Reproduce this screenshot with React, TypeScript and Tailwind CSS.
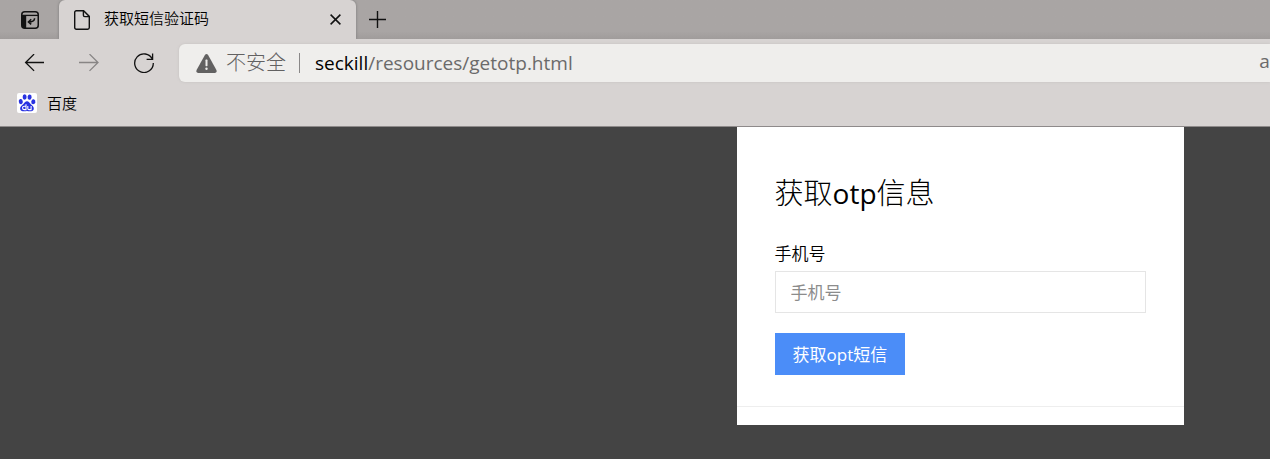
import React from "react";

function TabActionsIcon() {
  return (
    <svg width="18" height="18" viewBox="0 0 18 18" fill="none" aria-hidden="true">
      <rect x="0.75" y="0.75" width="16.5" height="16.5" rx="3" stroke="#111" strokeWidth="1.5" />
      <path d="M1 4.4H17" stroke="#111" strokeWidth="1.3" />
      <path d="M1 4.4H5.2V17H3.6A2.6 2.6 0 0 1 1 14.4Z" fill="#111" />
      <path d="M13.6 7.2C13.6 9.6 12 10.9 7.6 10.9M10.2 8.2L7.4 10.9L10.2 13.4" stroke="#111" strokeWidth="1.5" />
    </svg>
  );
}

function PageIcon() {
  return (
    <svg width="16" height="20" viewBox="0 0 16 20" fill="none" aria-hidden="true">
      <path
        d="M2.3 0.7H9.6L15.3 6.4V17.6A1.6 1.6 0 0 1 13.7 19.2H2.3A1.6 1.6 0 0 1 0.7 17.6V2.3A1.6 1.6 0 0 1 2.3 0.7Z"
        stroke="#111"
        strokeWidth="1.4"
      />
      <path d="M9.4 1V5.2A1.4 1.4 0 0 0 10.8 6.6H15" stroke="#111" strokeWidth="1.4" />
    </svg>
  );
}

function ArrowIcon({ forward = false }: { forward?: boolean }) {
  return (
    <svg width="20" height="18" viewBox="0 0 20 18" fill="none" aria-hidden="true">
      {forward ? (
        <path d="M0 8.5H19M10.5 0.1L19 8.5L10.5 16.9" stroke="#888585" strokeWidth="1.3" />
      ) : (
        <path d="M20 8.5H1.6M10.1 0.1L1.6 8.5L10.1 16.9" stroke="#111" strokeWidth="1.3" />
      )}
    </svg>
  );
}

function RefreshIcon() {
  return (
    <svg width="20" height="20" viewBox="0 0 20 20" fill="none" aria-hidden="true">
      <path d="M18.4 6.2A9.3 9.3 0 1 0 19.3 10" stroke="#111" strokeWidth="1.3" />
      <path d="M18.6 0.4V6.3H12.6" stroke="#111" strokeWidth="1.3" />
    </svg>
  );
}

function WarningIcon() {
  return (
    <svg width="21" height="19" viewBox="0 0 21 19" aria-hidden="true">
      <path
        d="M8.9 1.1Q10.5 -0.9 12.1 1.1L20.4 16Q21.2 18.6 18.7 19H2.3Q-0.2 18.6 0.6 16Z"
        fill="#626161"
      />
      <rect x="9.5" y="5.6" width="2" height="6.6" rx="0.6" fill="#efeeec" />
      <circle cx="10.5" cy="14.8" r="1.2" fill="#efeeec" />
    </svg>
  );
}

function BaiduIcon() {
  return (
    <svg width="20" height="20" viewBox="0 0 20 20" aria-hidden="true">
      <rect width="20" height="20" rx="2" fill="#fff" />
      <g fill="#2932e1">
        <ellipse cx="3.8" cy="8.6" rx="2" ry="2.6" transform="rotate(-12 3.8 8.6)" />
        <ellipse cx="7.6" cy="4" rx="2" ry="2.7" />
        <ellipse cx="12.6" cy="4.1" rx="2" ry="2.7" transform="rotate(8 12.6 4.1)" />
        <ellipse cx="16.3" cy="8.8" rx="2" ry="2.5" transform="rotate(10 16.3 8.8)" />
        <path d="M10 8.2C11.8 8.2 12.5 9.7 13.6 10.9C15 12.2 17 13.4 16.8 15.7C16.6 18.4 13.9 18.5 10 18.1C6 18.5 3.3 18.4 3.1 15.7C3 13.4 5.1 12.2 6.4 10.9C7.5 9.7 8.2 8.2 10 8.2Z" />
      </g>
      <g fill="none" stroke="#fff" strokeWidth="1.1">
        <path d="M9 11.3V16.6H7.3C5 16.6 5 13.2 7.3 13.2H9" />
        <path d="M10.8 13V15.4Q10.8 16.6 12 16.6H14.1V13" />
      </g>
    </svg>
  );
}

function TabBar() {
  return (
    <div className="flex h-[39px] bg-[#a8a4a3] bg-linear-to-b from-[#a9a5a4] from-80% to-[#a09c9b]">
      <button type="button" aria-label="Tab actions" className="flex w-[59px] items-center justify-center">
        <TabActionsIcon />
      </button>
      <div className="flex w-[297px] items-center rounded-t-md bg-[#d7d3d2] pl-[15px] pr-[13px] shadow-[0_0_3px_#777]">
        <PageIcon />
        <span className="ml-[14px] flex-1 pb-[3px] text-[15px] font-[350] leading-5 text-black">获取短信验证码</span>
        <button type="button" aria-label="Close tab" className="flex w-4 justify-center">
          <svg width="11" height="11" viewBox="0 0 11 11" aria-hidden="true">
            <path d="M0.6 0.6L10.4 10.4M10.4 0.6L0.6 10.4" stroke="#111" strokeWidth="1.5" />
          </svg>
        </button>
      </div>
      <button type="button" aria-label="New tab" className="flex w-[42px] items-center justify-center">
        <svg width="17" height="17" viewBox="0 0 17 17" aria-hidden="true">
          <path d="M8.5 0V17M0 8.5H17" stroke="#111" strokeWidth="1.4" />
        </svg>
      </button>
    </div>
  );
}

function Toolbar() {
  return (
    <div className="relative flex h-12 items-center bg-[#d7d3d2] pl-6">
      <button type="button" aria-label="Back" className="mr-[35px]">
        <ArrowIcon />
      </button>
      <button type="button" aria-label="Forward" className="mr-[35px]">
        <ArrowIcon forward />
      </button>
      <button type="button" aria-label="Refresh" className="mr-[25px]">
        <RefreshIcon />
      </button>
      <div className="flex h-[38px] min-w-0 flex-1 items-center overflow-hidden rounded-l-md bg-[#efeeec] pl-[17px] leading-7 shadow-[0_0_3px_#c4c0bf]">
        <WarningIcon />
        <span className="ml-[9px] shrink-0 text-xl font-light text-[#626161]">不安全</span>
        <span className="ml-[13px] h-5 w-px shrink-0 bg-[#8a8888]" />
        <span className="ml-[15px] flex-1 whitespace-nowrap font-['Open_Sans',sans-serif] text-[19px] text-[#6b6a6a]">
          <span className="text-black">seckill</span>/resources/getotp.html
        </span>
        <button type="button" aria-label="Translate" className="w-[11px] shrink-0 pb-1 text-[19px] text-[#6b6a6a]">
          a
        </button>
      </div>
    </div>
  );
}

export default function App() {
  return (
    <div className="flex min-h-screen flex-col overflow-x-hidden bg-[#444] font-['Open_Sans','Noto_Sans_CJK_SC',sans-serif]">
      <header>
        <TabBar />
        <Toolbar />
        <nav className="flex h-10 items-start border-b border-[#8e8a8a] bg-[#d7d3d2] pl-[17px] pt-[6px]">
          <a href="#baidu" className="flex items-center gap-[10px] text-[15px] font-[350] leading-5 text-black">
            <BaiduIcon />
            百度
          </a>
        </nav>
      </header>
      <main className="ml-[58%] w-[447px] max-w-full bg-white pb-[18px] pt-[46px]">
        <form className="flex flex-col items-start border-b border-[#eee] px-[38px] pb-[31px]" onSubmit={(e) => e.preventDefault()}>
          <h3 className="text-[29px] font-light leading-10 text-black">
            获取<span className="text-[28px] font-normal">otp</span>信息
          </h3>
          <label htmlFor="phone" className="mt-[29px] text-[17px] font-[350] leading-6 text-black">
            手机号
          </label>
          <input
            id="phone"
            type="text"
            placeholder="手机号"
            className="mt-[5px] h-[42px] w-full border border-[#e5e5e5] bg-white px-[15px] text-[17px] text-black outline-none placeholder:text-[#8c8c8c]"
          />
          <button type="submit" className="mt-5 h-[42px] bg-[#4b8df8] px-[18px] pt-px text-[17px] leading-6 text-white">
            获取opt短信
          </button>
        </form>
      </main>
    </div>
  );
}
